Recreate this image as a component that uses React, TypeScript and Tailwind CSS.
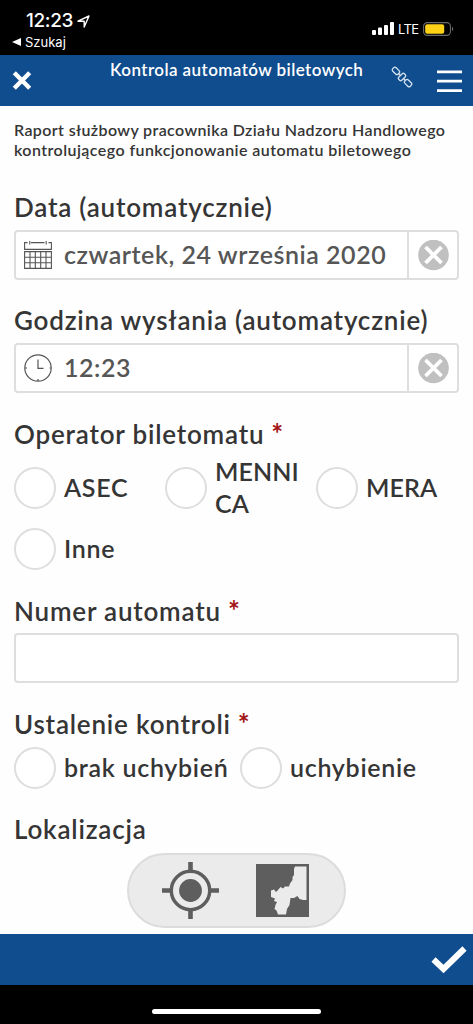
import type { ReactNode } from "react";

const Label = ({ children, required }: { children: ReactNode; required?: boolean }) => (
  <div className="-mt-px h-8 mb-[7px] text-[26px] leading-8 font-semibold tracking-[0.8px] whitespace-nowrap">
    {children}
    {required && <span className="ml-[7px] text-[28px] leading-8 font-bold tracking-normal text-[#a31515]">*</span>}
  </div>
);

const ClearButton = () => (
  <button className="flex w-[50px] h-full items-center justify-center border-l-2 border-[#dedede]">
    <svg className="w-[31px] h-[31px]" viewBox="0 0 31 31">
      <circle cx="15.5" cy="15" r="15.3" fill="#c0c0c0" />
      <path d="M7.5 7l16 16M23.5 7L7.5 23" stroke="#fff" strokeWidth="3.8" />
    </svg>
  </button>
);

const Field = ({ icon, value }: { icon: ReactNode; value: string }) => (
  <div className="flex h-[50px] items-center rounded border-2 border-[#dedede] bg-white">
    <div className="ml-2 w-7 h-7 shrink-0">{icon}</div>
    <div className="-mt-0.5 ml-3 flex-1 text-[25px] leading-8 font-semibold tracking-[0.53px] text-[#565656] whitespace-nowrap">
      {value}
    </div>
    <ClearButton />
  </div>
);

const Radio = ({
  children,
  className = "",
  tracking = "tracking-[0.7px]",
}: {
  children: ReactNode;
  className?: string;
  tracking?: string;
}) => (
  <div className={`flex items-center ${className}`}>
    <span className="w-[42px] h-[42px] shrink-0 rounded-full border-2 border-[#dedede] bg-white"></span>
    <span className={`-mt-px mb-px ml-2 text-[25px] leading-8 font-semibold ${tracking}`}>{children}</span>
  </div>
);

const CalendarIcon = () => (
  <svg className="w-7 h-7" viewBox="0 0 28 28" fill="none" stroke="#555" strokeWidth="1.1">
    <path d="M3.5 1.6H.6V8.4H27.4V1.6H24.5M7 1.6H20.5M5.8 0V3.4M22.2 0V3.4" />
    <path d="M.6 10.6H27.4V27.4H.6ZM.6 16.2H27.4M.6 21.8H27.4M6 10.6V27.4M11.3 10.6V27.4M16.7 10.6V27.4M22 10.6V27.4" />
  </svg>
);

const ClockIcon = () => (
  <svg className="w-7 h-7" viewBox="0 0 28 28" fill="none" stroke="#555" strokeWidth="1.2">
    <circle cx="14" cy="14" r="13.2" />
    <path d="M14 5.5V14.4H19.5M1 14H3M25.5 14H27M14 25V27" />
  </svg>
);

const StatusBar = () => (
  <div className="flex h-[55px] shrink-0 justify-between bg-black text-white">
    <div className="pl-3 pt-[10px]">
      <div className="flex h-[22px] items-center pl-[14px]">
        <span className="text-[19px] leading-[22px] font-medium tracking-[-0.4px]">12:23</span>
        <svg className="ml-1 w-[13px] h-[13px]" viewBox="0 0 13 13">
          <path d="M1 6.2L12 1L7.2 12V6.2Z" fill="none" stroke="#fff" strokeWidth="1.4" strokeLinejoin="round" />
        </svg>
      </div>
      <div className="flex h-5 items-center">
        <svg className="w-[9px] h-2" viewBox="0 0 9 8">
          <path d="M0 4L9 0V8Z" fill="#fff" />
        </svg>
        <span className="ml-1 text-[13px] leading-5">Szukaj</span>
      </div>
    </div>
    <div className="flex h-[13px] mt-[22px] mr-[19px] items-center">
      <svg className="w-[22px] h-[13px]" viewBox="0 0 22 13" fill="#fff">
        <rect x="0" y="8" width="4" height="5" rx="1" />
        <rect x="6" y="5.5" width="4" height="7.5" rx="1" />
        <rect x="12" y="3" width="4" height="10" rx="1" />
        <rect x="18" y="0" width="4" height="13" rx="1" />
      </svg>
      <span className="ml-1 w-5 text-[13px] leading-4 tracking-[-0.6px]">LTE</span>
      <svg className="ml-[5px] w-[31px] h-[14px]" viewBox="0 0 31 14">
        <rect x=".6" y=".6" width="26.8" height="12.8" rx="3.6" fill="none" stroke="#6b6b6b" strokeWidth="1.1" />
        <rect x="2.2" y="2.2" width="19" height="9.6" rx="2" fill="#fcd116" />
        <path d="M29 4.8C30.6 5.4 30.6 8.6 29 9.2Z" fill="#6b6b6b" />
      </svg>
    </div>
  </div>
);

const Header = () => (
  <header className="flex h-[51px] shrink-0 justify-between bg-[#0f4d8e] text-white">
    <svg className="mt-[15px] ml-3 w-5 h-5" viewBox="0 0 20 20">
      <path d="M2.3 2.8L17.7 18.2M17.7 2.8L2.3 18.2" stroke="#fff" strokeWidth="4.4" />
    </svg>
    <h1 className="ml-[78px] mt-[5px] flex-1 text-[17px] leading-5 font-semibold tracking-[0.43px] whitespace-nowrap">
      Kontrola automatów biletowych
    </h1>
    <svg className="mt-[11px] mr-[24px] w-[22px] h-[22px]" viewBox="0 0 22 22" fill="none" stroke="#d5e2ef" strokeWidth="1.3">
      <g transform="rotate(45 11 11)">
        <rect x="-1.4" y="8.6" width="7.6" height="4.8" rx="1.8" />
        <path d="M6.2 11H8.8M13.2 11H15.8" />
        <rect x="8.8" y="7" width="4.4" height="8" rx="1.5" />
        <rect x="15.8" y="8.6" width="7.6" height="4.8" rx="1.8" />
      </g>
    </svg>
    <svg className="mt-[15px] mr-[11px] w-[25px] h-[23px]" viewBox="0 0 25 23">
      <path d="M0 1.8H25M0 11.2H25M0 20.6H25" stroke="#fff" strokeWidth="2.8" />
    </svg>
  </header>
);

const LocationPicker = () => (
  <div className="mx-auto mt-2 flex w-[219px] h-[75px] items-center justify-between rounded-full border-2 border-[#dcdcdc] bg-[#ebebeb] pl-[33px] pr-[35px]">
    <svg className="w-[57px] h-[57px]" viewBox="0 0 57 57">
      <circle cx="28.5" cy="28.5" r="19.2" fill="none" stroke="#5e5e5e" strokeWidth="3.4" />
      <circle cx="28.5" cy="28.5" r="11.4" fill="#5e5e5e" />
      <path d="M28.5 0V10M28.5 47V57M0 28.5H10M47 28.5H57" stroke="#5e5e5e" strokeWidth="4.6" />
    </svg>
    <svg className="w-[53px] h-[53px]" viewBox="0 0 53 53">
      <rect width="53" height="53" fill="#5e5e5e" />
      <path
        d="M39 2.5H50.5V36H47L43.5 35L41.5 32L38 34H34.5L33.5 41L31 45L30 50.5H22L20.5 46.5L18.5 45L19.5 41L21 38L18 37L19 34.5L15 33V26.5L18 25.5L20 28L22 26L24.5 23L27 24.5L29 22.5H33L34 19.5L36.5 16V13L38 11V5Z"
        fill="#ebebeb"
      />
    </svg>
  </div>
);

const App = () => {
  return (
    <div className="flex w-[473px] h-[1024px] flex-col overflow-hidden bg-[#fefefe] font-['Lato',sans-serif] text-[#353535]">
      <div className="font-['Inter',sans-serif]">
        <StatusBar />
      </div>
      <Header />

      <main className="flex h-[828px] shrink-0 flex-col px-[14px] pt-[15px]">
        <p className="-mt-px mb-8 text-[16px] leading-5 font-semibold tracking-[0.38px] whitespace-nowrap">
          Raport służbowy pracownika Działu Nadzoru Handlowego
          <br />
          <span className="tracking-[0.44px]">kontrolującego funkcjonowanie automatu biletowego</span>
        </p>

        <div className="flex flex-col gap-[25px]">
          <section>
            <Label>Data (automatycznie)</Label>
            <Field icon={<CalendarIcon />} value="czwartek, 24 września 2020" />
          </section>

          <section>
            <Label>Godzina wysłania (automatycznie)</Label>
            <Field icon={<ClockIcon />} value="12:23" />
          </section>

          <section>
            <Label required>Operator biletomatu</Label>
            <div className="grid grid-cols-[151px_151px_143px] gap-y-2">
              <Radio>ASEC</Radio>
              <Radio tracking="tracking-[0.1px]">
                MENNI
                <br />
                CA
              </Radio>
              <Radio tracking="tracking-[0.1px]">MERA</Radio>
              <Radio>Inne</Radio>
            </div>
          </section>

          <section>
            <Label required>Numer automatu</Label>
            <div className="h-[50px] rounded border-2 border-[#dedede] bg-white"></div>
          </section>

          <section>
            <Label required>Ustalenie kontroli</Label>
            <div className="flex pt-px">
              <Radio className="w-[226px] whitespace-nowrap">brak uchybień</Radio>
              <Radio>uchybienie</Radio>
            </div>
          </section>

          <section>
            <Label>Lokalizacja</Label>
            <LocationPicker />
          </section>
        </div>
      </main>

      <footer className="flex h-[51px] shrink-0 items-center justify-end bg-[#0f4d8e] pr-[6px]">
        <svg className="w-[36px] h-[30px]" viewBox="0 0 36 30">
          <path d="M2.5 14.5L12.5 24L33.5 3.5" fill="none" stroke="#fff" strokeWidth="6" />
        </svg>
      </footer>
      <div className="flex flex-1 justify-center bg-black pt-6">
        <div className="w-[169px] h-[5px] rounded-full bg-white"></div>
      </div>
    </div>
  );
};

export default App;
